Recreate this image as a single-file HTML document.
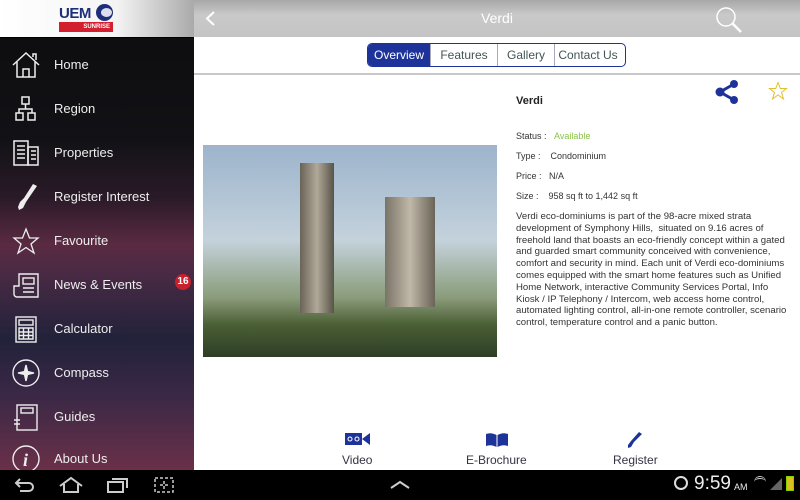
<!DOCTYPE html>
<html><head><style>
*{margin:0;padding:0;box-sizing:border-box}
body{width:800px;height:500px;overflow:hidden;position:relative;font-family:"Liberation Sans",sans-serif;background:#fff}
#side{position:absolute;left:0;top:0;width:194px;height:470px;background:linear-gradient(180deg,#0c0c0e 0%,#121216 30%,#2a1a28 42%,#5a2a42 52%,#4a2a44 58%,#22223a 72%,#3a2846 84%,#6a3048 100%)}
#logo{position:absolute;left:0;top:0;width:194px;height:37px;background:linear-gradient(90deg,#fff 0%,#f4f4f4 60%,#aaa 100%)}
.item{position:absolute;left:0;width:194px;height:44px;color:#eee;font-size:13px}
.item span{position:absolute;left:54px;top:15px}
.item svg{position:absolute;left:11px;top:8px}
#top{position:absolute;left:194px;top:0;width:606px;height:37px;background:linear-gradient(180deg,#a8a8a8,#c9c9c9 40%,#c4c4c4)}
#nav{position:absolute;left:0;top:470px;width:800px;height:30px;background:#000}
.tabs{position:absolute;left:367px;top:43px;height:24px;display:flex;border:1px solid #1e3399;border-radius:5px;overflow:hidden;font-size:12px}
.tabs div{height:22px;line-height:22px;text-align:center;color:#455;border-left:1px solid #aab}
.det{position:absolute;left:516px;font-size:9px;color:#333}
</style></head><body>
<div id="side">
<div id="logo">
<div style="position:absolute;left:59px;top:5px;font:bold 15px 'Liberation Sans';color:#1d2f7a;letter-spacing:-0.5px">UEM</div>
<div style="position:absolute;left:96px;top:4px;width:17px;height:17px;border-radius:50%;background:#1d2f7a"><div style="position:absolute;left:5px;top:4px;width:11px;height:9px;border-radius:50%;background:#dde"></div></div>
<div style="position:absolute;left:59px;top:22px;width:54px;height:10px;background:#d2202f;color:#fff;font:bold 6px 'Liberation Sans';text-align:right;padding-right:3px;line-height:10px">SUNRISE</div>
</div>
<div style="position:absolute;left:0;top:37px;width:194px;height:1px;background:#000"></div>

<div class="item" style="top:42px"><svg width="30" height="30" fill="none" stroke="#eee" stroke-width="1.5"><path d="M2 15 L15 3 L28 15 M6 12 V27 H24 V12 M12 27 V19 H18 V27 M22 7 V4 H25 V10"/></svg><span>Home</span></div>
<div class="item" style="top:86px"><svg width="30" height="30" fill="none" stroke="#eee" stroke-width="1.5"><rect x="11" y="3" width="7" height="7"/><rect x="5" y="19" width="7" height="7"/><rect x="17" y="19" width="7" height="7"/><path d="M14.5 10 V15 M8 19 V15 H21 V19"/></svg><span>Region</span></div>
<div class="item" style="top:130px"><svg width="30" height="30" fill="none" stroke="#eee" stroke-width="1.5"><rect x="3" y="3" width="14" height="24"/><rect x="17" y="9" width="10" height="18"/><path d="M6 8h8M6 12h8M6 16h8M6 20h8M20 13h5M20 17h5M20 21h5"/></svg><span>Properties</span></div>
<div class="item" style="top:174px"><svg width="30" height="30" fill="#eee"><path d="M22 2 L26 4 L15 20 L12 26 L8 28 L7 25 L9 20 L13 16 Z"/></svg><span>Register Interest</span></div>
<div class="item" style="top:218px"><svg width="30" height="30" fill="none" stroke="#eee" stroke-width="1.3"><path d="M15 3 L18.5 12 L27 12 L20 18 L23 27 L15 21.5 L7 27 L10 18 L3 12 L11.5 12 Z"/></svg><span>Favourite</span></div>
<div class="item" style="top:262px"><svg width="30" height="30" fill="none" stroke="#eee" stroke-width="1.4"><path d="M8 4 H27 V27 H6 a3 3 0 0 1 -3 -3 V16 H8 Z"/><rect x="12" y="8" width="11" height="6"/><path d="M12 18h11M12 22h11"/></svg><span>News &amp; Events</span>
<div style="position:absolute;left:175px;top:12px;width:16px;height:16px;border-radius:50%;background:#c8202c;color:#fff;font:bold 10px 'Liberation Sans';text-align:center;line-height:16px">16</div></div>
<div class="item" style="top:306px"><svg width="30" height="30" fill="none" stroke="#eee" stroke-width="1.4"><rect x="5" y="3" width="20" height="25"/><rect x="8" y="6" width="14" height="5"/><path d="M8 14h14v11H8zM12.5 14v11M17.5 14v11M8 18h14M8 21.5h14"/></svg><span>Calculator</span></div>
<div class="item" style="top:350px"><svg width="30" height="30" fill="none" stroke="#eee" stroke-width="1.4"><circle cx="15" cy="15" r="13"/><path d="M15 7 L16.5 13.5 L23 15 L16.5 16.5 L15 23 L13.5 16.5 L7 15 L13.5 13.5 Z" fill="#eee"/></svg><span>Compass</span></div>
<div class="item" style="top:394px"><svg width="30" height="30" fill="none" stroke="#eee" stroke-width="1.4"><rect x="6" y="3" width="20" height="25"/><rect x="10" y="6" width="12" height="5"/><path d="M3 18h6M3 22h6"/></svg><span>Guides</span></div>
<div class="item" style="top:436px"><svg width="30" height="30" fill="none" stroke="#eee" stroke-width="1.4"><circle cx="15" cy="15" r="13"/><text x="12" y="22" fill="#eee" stroke="none" font-family="Liberation Serif" font-style="italic" font-weight="bold" font-size="18">i</text></svg><span>About Us</span></div>
</div>

<div id="top">
<svg style="position:absolute;left:10px;top:10px" width="12" height="17" fill="none" stroke="#fff" stroke-width="2"><path d="M10 2 L3 8.5 L10 15"/></svg>
<div style="position:absolute;left:0;width:606px;top:10px;text-align:center;color:#fff;font-size:14px">Verdi</div>
<svg style="position:absolute;left:520px;top:5px" width="30" height="30" fill="none" stroke="#fff" stroke-width="1.5"><circle cx="12" cy="12" r="9"/><path d="M18.5 18.5 L27 27" stroke-width="2.5"/></svg>
</div>
<div style="position:absolute;left:194px;top:73px;width:606px;height:2px;background:#c8c8c8"></div>

<div class="tabs">
<div style="width:62px;background:#1e3399;color:#fff;border-left:none">Overview</div>
<div style="width:67px">Features</div>
<div style="width:57px">Gallery</div>
<div style="width:71px;padding-right:4px">Contact Us</div>
</div>

<div style="position:absolute;left:203px;top:145px;width:294px;height:212px;background:linear-gradient(180deg,#9cb4cc 0%,#c4d2dc 45%,#8a9c7a 72%,#4a5e34 85%,#2e3e26 100%)">
<div style="position:absolute;left:97px;top:18px;width:34px;height:150px;background:linear-gradient(90deg,#6a6458,#b0a898,#585448)"></div>
<div style="position:absolute;left:182px;top:52px;width:50px;height:110px;background:linear-gradient(90deg,#7a7468,#c0b8a8,#6a6458)"></div>
</div>

<div class="det" style="top:95px;font-size:11px;font-weight:bold;color:#222">Verdi</div>
<svg style="position:absolute;left:715px;top:80px" width="24" height="24" fill="#1e3399"><circle cx="19" cy="4" r="4"/><circle cx="5" cy="12" r="4.5"/><circle cx="19" cy="20" r="4"/><path d="M5 12 L19 4 M5 12 L19 20" stroke="#1e3399" stroke-width="3"/></svg>
<svg style="position:absolute;left:768px;top:81px" width="20" height="20" fill="none" stroke="#e0c030" stroke-width="1"><path d="M10 1.5 L12.3 7.5 L18.5 7.5 L13.5 11.5 L15.5 18 L10 14 L4.5 18 L6.5 11.5 L1.5 7.5 L7.7 7.5 Z"/></svg>
<div class="det" style="top:131px">Status :&nbsp;&nbsp;&nbsp;<span style="color:#8bc34a">Available</span></div>
<div class="det" style="top:151px">Type :&nbsp;&nbsp;&nbsp;&nbsp;Condominium</div>
<div class="det" style="top:171px">Price :&nbsp;&nbsp;&nbsp;N/A</div>
<div class="det" style="top:191px">Size :&nbsp;&nbsp;&nbsp;&nbsp;958 sq ft to 1,442 sq ft</div>
<div class="det" style="top:211px;width:272px;line-height:11.8px;font-size:9.6px">Verdi eco-dominiums is part of the 98-acre mixed strata development of Symphony Hills, &nbsp;situated on 9.16 acres of freehold land that boasts an eco-friendly concept within a gated and guarded smart community conceived with convenience, comfort and security in mind. Each unit of Verdi eco-dominiums comes equipped with the smart home features such as Unified Home Network, interactive Community Services Portal, Info Kiosk / IP Telephony / Intercom, web access home control, automated lighting control, all-in-one remote controller, scenario control, temperature control and a panic button.</div>

<svg style="position:absolute;left:345px;top:432px" width="26" height="14"><rect x="0" y="1" width="17" height="12" fill="#1e3399"/><path d="M17 7 L25 1 V13 Z" fill="#1e3399"/><circle cx="5" cy="7" r="2" fill="none" stroke="#fff"/><circle cx="12" cy="7" r="2" fill="none" stroke="#fff"/></svg>
<div style="position:absolute;left:342px;top:453px;font-size:12px;color:#334">Video</div>
<svg style="position:absolute;left:486px;top:432px" width="22" height="16" fill="#1e3399"><path d="M0 2 Q5 0 10.5 3 V15 Q5 12 0 14 Z M11.5 3 Q17 0 22 2 V14 Q17 12 11.5 15 Z"/></svg>
<div style="position:absolute;left:466px;top:453px;font-size:12px;color:#334">E-Brochure</div>
<svg style="position:absolute;left:625px;top:431px" width="18" height="18" fill="#1e3399"><path d="M14 1 L17 3 L9 11 L6 16 L3 17 L3 14 L6 10 Z"/></svg>
<div style="position:absolute;left:613px;top:453px;font-size:12px;color:#334">Register</div>

<div id="nav">
<svg style="position:absolute;left:14px;top:7px" width="22" height="16" fill="none" stroke="#ccc" stroke-width="2"><path d="M6 2 L2 6 L6 10 M2 6 H15 a4 4 0 0 1 0 8 H6"/></svg>
<svg style="position:absolute;left:58px;top:6px" width="26" height="18" fill="none" stroke="#ccc" stroke-width="2"><path d="M2 10 L13 2 L24 10 M6 8 V16 H20 V8"/></svg>
<svg style="position:absolute;left:106px;top:6px" width="24" height="18" fill="none" stroke="#ccc" stroke-width="2"><rect x="2" y="6" width="15" height="10"/><path d="M6 3 H21 V12"/></svg>
<svg style="position:absolute;left:153px;top:6px" width="22" height="18" fill="none" stroke="#ccc" stroke-width="1.5" stroke-dasharray="3 2"><rect x="2" y="2" width="18" height="14"/><path d="M11 5 V13 M7 9 H15"/></svg>
<svg style="position:absolute;left:389px;top:10px" width="22" height="10" fill="none" stroke="#ccc" stroke-width="2"><path d="M2 8 L11 2 L20 8"/></svg>
<div style="position:absolute;left:674px;top:6px;width:14px;height:14px;border-radius:50%;border:2px solid #ddd"></div>
<div style="position:absolute;left:694px;top:3px;font-size:19px;color:#eee">9:59</div>
<div style="position:absolute;left:734px;top:12px;font-size:9px;color:#eee">AM</div>
<div style="position:absolute;left:754px;top:6px;width:12px;height:14px;border-top:3px double #ccc;border-radius:6px 6px 0 0"></div>
<div style="position:absolute;left:770px;top:8px;width:0;height:0;border-left:12px solid transparent;border-bottom:12px solid #666"></div>
<div style="position:absolute;left:786px;top:6px;width:8px;height:15px;background:#d8c020;border:1px solid #8c0"></div>
</div>
</body></html>
